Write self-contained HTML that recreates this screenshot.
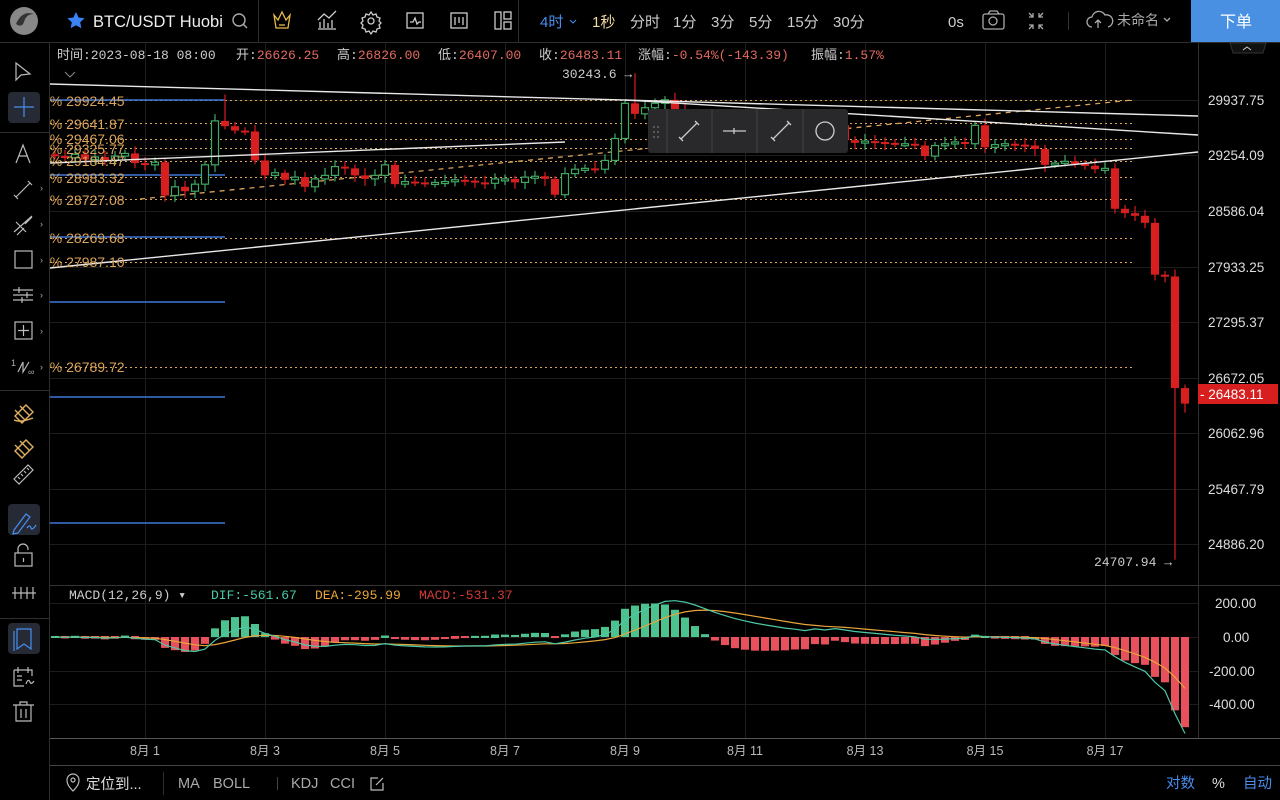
<!DOCTYPE html>
<html><head><meta charset="utf-8">
<style>
*{margin:0;padding:0;box-sizing:border-box}
body{width:1280px;height:800px;background:#000;overflow:hidden;position:relative;font-family:"Liberation Sans","Noto Sans CJK SC",sans-serif;color:#ddd}
svg{position:absolute;left:0;top:0}
.m{font-family:"Liberation Mono","Noto Sans CJK SC",monospace}
</style></head>
<body>
<svg id="s" width="1280" height="800" viewBox="0 0 1280 800" font-family="Liberation Sans, Noto Sans CJK SC, sans-serif">
<g id="grid" stroke="#1c1c1c" stroke-width="1"></g>
<line x1="0" y1="42.5" x2="1280" y2="42.5" stroke="#2e2e2e"/>
<line x1="49.5" y1="43" x2="49.5" y2="800" stroke="#2e2e2e"/>
<line x1="1198.5" y1="43" x2="1198.5" y2="738" stroke="#2e2e2e"/>
<line x1="50" y1="585.5" x2="1280" y2="585.5" stroke="#333"/>
<line x1="50" y1="738.5" x2="1280" y2="738.5" stroke="#555"/>
<line x1="50" y1="765.5" x2="1280" y2="765.5" stroke="#444"/>

<g stroke="#d9a35a" stroke-width="1" stroke-dasharray="2,3">
<line x1="50" y1="100.5" x2="1133" y2="100.5"/><line x1="50" y1="123.5" x2="1133" y2="123.5"/>
<line x1="50" y1="139.5" x2="1133" y2="139.5"/><line x1="50" y1="148.5" x2="1133" y2="148.5"/>
<line x1="50" y1="161.5" x2="1133" y2="161.5"/><line x1="50" y1="177.5" x2="1133" y2="177.5"/>
<line x1="50" y1="199.5" x2="1133" y2="199.5"/><line x1="50" y1="238.5" x2="1133" y2="238.5"/>
<line x1="50" y1="262.5" x2="1133" y2="262.5"/><line x1="50" y1="367.5" x2="1133" y2="367.5"/>
</g>
<line x1="140" y1="199" x2="1133" y2="100" stroke="#d9a35a" stroke-width="1.3" stroke-dasharray="5,5"/>
<g stroke="#3c78d8" stroke-width="1.5">
<line x1="50" y1="100" x2="225" y2="100"/><line x1="50" y1="175" x2="225" y2="175"/>
<line x1="50" y1="237" x2="225" y2="237"/><line x1="50" y1="302" x2="225" y2="302"/>
<line x1="50" y1="397" x2="225" y2="397"/><line x1="50" y1="523" x2="225" y2="523"/>
</g>
<g id="candles"></g>
<g stroke="#e8e8e8" stroke-width="1.4">
<line x1="50" y1="84" x2="1198" y2="116"/>
<line x1="625" y1="100" x2="1198" y2="135"/>
<line x1="50" y1="268" x2="1198" y2="152"/>
<line x1="50" y1="163" x2="565" y2="142"/>
</g>
<g fill="#d9a35a" font-size="14">
<text x="42" y="106">0% 29924.45</text><text x="42" y="129">5% 29641.87</text>
<text x="42" y="144">2% 29467.06</text><text x="42" y="154">0% 29325.77</text>
<text x="42" y="166">3% 29184.47</text><text x="42" y="183">5% 28983.32</text>
<text x="42" y="205">0% 28727.08</text><text x="42" y="243">2% 28269.68</text>
<text x="42" y="267">3% 27987.10</text><text x="42" y="372">3% 26789.72</text>
</g>
<rect x="0" y="43" width="49" height="757" fill="#000"/>
<line x1="49.5" y1="43" x2="49.5" y2="800" stroke="#2e2e2e"/>
<line x1="0" y1="132.5" x2="49" y2="132.5" stroke="#2e2e2e"/>
<line x1="0" y1="390.5" x2="49" y2="390.5" stroke="#2e2e2e"/>
<line x1="0" y1="618.5" x2="49" y2="618.5" stroke="#2e2e2e"/>

<g id="macd"></g>

<g fill="#ccc" font-size="13" class="m">
<text x="562" y="78">30243.6 →</text>
<text x="1094" y="566">24707.94 →</text>
</g>
<rect x="648" y="109" width="200" height="44" rx="3" fill="#29292c"/>
<g stroke="#444"><line x1="667" y1="109" x2="667" y2="153"/><line x1="712" y1="109" x2="712" y2="153"/><line x1="757" y1="109" x2="757" y2="153"/><line x1="803" y1="109" x2="803" y2="153"/></g>
<g fill="#666"><circle cx="654" cy="127" r="1"/><circle cx="658" cy="127" r="1"/><circle cx="654" cy="132" r="1"/><circle cx="658" cy="132" r="1"/><circle cx="654" cy="137" r="1"/><circle cx="658" cy="137" r="1"/></g>
<g stroke="#ccc" stroke-width="1.3" fill="none">
<path d="M681 139 L697 123 M679 137 L683 141 M695 121 L699 125"/>
<path d="M723 131 H746 M734 128 V134"/>
<path d="M773 139 L789 123 M771 137 L775 141 M787 121 L791 125"/>
<circle cx="825" cy="131" r="9"/>
</g>

<g fill="#ddd" font-size="13.5">
<text x="1208" y="105">29937.75</text><text x="1208" y="160">29254.09</text>
<text x="1208" y="216">28586.04</text><text x="1208" y="272">27933.25</text>
<text x="1208" y="327">27295.37</text><text x="1208" y="383">26672.05</text>
<text x="1208" y="438">26062.96</text><text x="1208" y="494">25467.79</text>
<text x="1208" y="549">24886.20</text>
<text x="1215" y="608">200.00</text><text x="1223" y="642">0.00</text>
<text x="1209" y="676">-200.00</text><text x="1209" y="709">-400.00</text>
</g>
<rect x="1198" y="384" width="80" height="20" fill="#d71f1f"/>
<text x="1200" y="399" fill="#fff" font-size="13.5">- 26483.11</text>

<g fill="#bbb" font-size="12.5" text-anchor="middle">
<text x="145" y="755">8月 1</text><text x="265" y="755">8月 3</text><text x="385" y="755">8月 5</text>
<text x="505" y="755">8月 7</text><text x="625" y="755">8月 9</text><text x="745" y="755">8月 11</text>
<text x="865" y="755">8月 13</text><text x="985" y="755">8月 15</text><text x="1105" y="755">8月 17</text>
</g>

<g font-size="13" class="m" fill="#ccc">
<text x="57" y="59">时间:2023-08-18 08:00</text>
<text x="236" y="59">开:<tspan fill="#e26a5f">26626.25</tspan></text>
<text x="337" y="59">高:<tspan fill="#e26a5f">26826.00</tspan></text>
<text x="438" y="59">低:<tspan fill="#e26a5f">26407.00</tspan></text>
<text x="539" y="59">收:<tspan fill="#e26a5f">26483.11</tspan></text>
<text x="638" y="59">涨幅:<tspan fill="#e26a5f">-0.54%(-143.39)</tspan></text>
<text x="811" y="59">振幅:<tspan fill="#e26a5f">1.57%</tspan></text>
<text x="69" y="599">MACD(12,26,9) ▾</text>
<text x="211" y="599" fill="#4cc9a6">DIF:-561.67</text>
<text x="315" y="599" fill="#e9a53a">DEA:-295.99</text>
<text x="419" y="599" fill="#d43a3a">MACD:-531.37</text>
</g>
<path d="M65 72 l5 5 l5 -5" stroke="#888" fill="none"/>
<path d="M1230 43 h36 l-3 10 h-30z" fill="#111" stroke="#333"/>
<path d="M1243 50 l4 -3 l4 3" stroke="#ccc" fill="none"/>

<circle cx="24" cy="21" r="14" fill="#888"/>
<path d="M16 24 q6 -14 18 -10 q-8 0 -10 8 q-2 6 -8 2z" fill="#333"/>
<path d="M76 12 l2.6 5.5 6 .7 -4.4 4.1 1.2 6 -5.4 -3 -5.4 3 1.2 -6 -4.4 -4.1 6 -.7z" fill="#3b82f6"/>
<text x="93" y="27" fill="#eee" font-size="16.5">BTC/USDT Huobi</text>
<g stroke="#aaa" stroke-width="1.4" fill="none">
<circle cx="239" cy="20" r="6"/><path d="M243 24 l4 4"/>
</g>
<line x1="258.5" y1="0" x2="258.5" y2="42" stroke="#2e2e2e"/>
<g stroke="#ccc" stroke-width="1.3" fill="none">
<path d="M274 15 l4 5 l4 -8 l4 8 l4 -5 l-2 13 h-12z" stroke="#e9b949"/><path d="M279 25 h6" stroke="#e9b949"/>
<path d="M318 29 h18 M320 28 v-6 M324 28 v-9 M328 28 v-5 M332 28 v-8 M318 20 l6 -6 l5 4 l7 -7"/>
<circle cx="371" cy="21" r="3"/><path d="M371 12 l2 3 3 -1 1 3 3 1 -1 3 2 2 -2 2 1 3 -3 1 -1 3 -3 -1 -2 3 -2 -3 -3 1 -1 -3 -3 -1 1 -3 -2 -2 2 -2 -1 -3 3 -1 1 -3 3 1z"/>
<rect x="407" y="13" width="16" height="15"/><path d="M410 22 h3 l2 -4 2 6 2 -2 h2"/>
<rect x="451" y="13" width="16" height="15"/><path d="M455 17 v8 M459 17 v6 M463 17 v8"/>
<rect x="495" y="12" width="6" height="17"/><rect x="504" y="12" width="7" height="7"/><rect x="504" y="22" width="7" height="7"/>
</g>
<line x1="518.5" y1="0" x2="518.5" y2="42" stroke="#2e2e2e"/>
<g font-size="15">
<text x="540" y="27" fill="#4a8ef0">4时</text><path d="M570 20 l3 3 3 -3" stroke="#4a8ef0" fill="none"/>
<text x="592" y="27" fill="#f0d9a0">1秒</text>
<text x="630" y="27" fill="#ccc">分时</text><text x="673" y="27" fill="#ccc">1分</text>
<text x="711" y="27" fill="#ccc">3分</text><text x="749" y="27" fill="#ccc">5分</text>
<text x="787" y="27" fill="#ccc">15分</text><text x="833" y="27" fill="#ccc">30分</text>
<text x="948" y="27" fill="#ccc">0s</text>
<text x="1117" y="25" fill="#aaa" font-size="14">未命名</text>
</g>
<g stroke="#aaa" stroke-width="1.3" fill="none">
<rect x="983" y="14" width="21" height="15" rx="2"/><path d="M988 14 l2 -3 h7 l2 3"/><circle cx="993" cy="21" r="4"/>
<path d="M1029 13 l4 4 M1033 13 v4 h-4 M1043 13 l-4 4 M1039 13 v4 h4 M1029 29 l4 -4 M1033 29 v-4 h-4 M1043 29 l-4 -4 M1039 29 v-4 h4"/>
<path d="M1092 27 a5 5 0 0 1 0 -10 a7 7 0 0 1 13 -2 a5 5 0 0 1 3 12 M1098 28 v-8 M1095 23 l3 -3 3 3"/>
<path d="M1164 18 l3 3 3 -3"/>
</g>
<line x1="1068.5" y1="12" x2="1068.5" y2="30" stroke="#333"/>
<rect x="1191" y="0" width="89" height="42" fill="#4a90e2"/>
<text x="1220" y="27" fill="#fff" font-size="16">下单</text>

<rect x="8" y="92" width="32" height="31" rx="4" fill="#252a35"/>
<rect x="8" y="504" width="32" height="31" rx="4" fill="#252a35"/>
<rect x="8" y="623" width="32" height="31" rx="4" fill="#252a35"/>
<g stroke="#bbb" stroke-width="1.2" fill="none">
<path d="M16 63 v17 l5 -5 l9 -1z"/>
<path d="M24 97 v20 M14 107 h20" stroke="#4a8ef0"/>
<path d="M16 163 l7 -18 l7 18 M19 156 h9"/>
<path d="M16 197 l14 -14 M14 195 l4 4 M28 181 l4 4"/>
<path d="M14 232 l18 -16 M17 235 l7 -7 M25 224 l7 -7 M16 222 l10 10"/>
<rect x="15" y="251" width="17" height="17"/>
<path d="M13 290 h20 M13 295 h20 M13 300 h20 M19 287 v6 M27 292 v6 M22 297 v6"/>
<rect x="15" y="322" width="17" height="17"/><path d="M23.5 325 v11 M18 330.5 h11"/>
<path d="M18 372 l5 -10 l0 10 l6 -10"/>
<path d="M14 479 l14 -14 l5 5 l-14 14z M18 477 l2 2 M21 474 l2 2 M24 471 l2 2 M27 468 l2 2"/>
<path d="M14 530 l12 -16 l4 3 l-12 16 l-5 1z" stroke="#4a8ef0"/><path d="M27 528 q3 -4 4 0 q1 3 5 -3" stroke="#4a8ef0"/>
<rect x="15" y="553" width="17" height="13"/><path d="M18 553 v-4 a5 5 0 0 1 10 0 v1 M23.5 558 v4"/>
<path d="M12 593 h24 M15 587 v12 M21 587 v12 M27 587 v12 M33 587 v12"/>
<path d="M17 629 h14 v20 l-7 -5 l-7 5z" stroke="#4a8ef0"/><path d="M14 631 v20" stroke="#4a8ef0"/>
<path d="M14 670 h18 v6 M14 670 v16 h10 M18 667 v6 M28 667 v6 M17 676 h5 M17 680 h5 M26 684 q2 -6 4 -2 q1 3 4 -1"/>
<path d="M16 705 v16 h15 v-16 M13 705 h21 M20 705 v-3 h7 v3 M21 709 v9 M26 709 v9"/>
</g>
<g fill="#aaa" font-size="9"><text x="11" y="366">1</text><text x="28" y="375">∞</text>
<text x="40" y="191">›</text><text x="40" y="227">›</text><text x="40" y="263">›</text><text x="40" y="298">›</text><text x="40" y="334">›</text><text x="40" y="370">›</text></g>
<g stroke="#e0b060" stroke-width="1.4" fill="none">
<path d="M15 416 l11 -11 l7 7 l-11 11z M15 410 l10 10 M20 406 l9 9 M14 420 q6 3 19 -2"/>
<path d="M15 451 l11 -11 l7 7 l-11 11z M15 445 l10 10 M20 441 l9 9"/>
</g>

<g stroke="#bbb" stroke-width="1.2" fill="none"><path d="M73 791 c-6 -6 -6 -9 -6 -11 a6 6 0 0 1 12 0 c0 2 0 5 -6 11z"/><circle cx="73" cy="780" r="2"/>
<path d="M378 778 h-7 v12 h12 v-7 M376 785 l7 -7"/></g>
<line x1="163.5" y1="772" x2="163.5" y2="795" stroke="#2e2e2e"/>
<line x1="277.5" y1="777" x2="277.5" y2="790" stroke="#444"/>
<g font-size="14.5">
<text x="86" y="789" fill="#ddd">定位到...</text>
<text x="178" y="788" fill="#aaa">MA</text><text x="213" y="788" fill="#aaa">BOLL</text>
<text x="291" y="788" fill="#aaa">KDJ</text><text x="330" y="788" fill="#aaa">CCI</text>
<text x="1166" y="788" fill="#4a8ef0">对数</text><text x="1212" y="788" fill="#ddd">%</text><text x="1243" y="788" fill="#4a8ef0">自动</text>
</g>
</svg>
<script>
var NS="http://www.w3.org/2000/svg";
function el(p,t,a){var e=document.createElementNS(NS,t);for(var k in a)e.setAttribute(k,a[k]);p.appendChild(e);return e;}
var g=document.getElementById('grid');
[145,265,385,505,625,745,865,985,1105].forEach(function(x){el(g,'line',{x1:x+.5,y1:43,x2:x+.5,y2:738});});
[100,155,211,267,322,378,433,489,544,603,637,671,704].forEach(function(y){el(g,'line',{x1:50,y1:y+.5,x2:1198,y2:y+.5});});
var C=[29300,29280,29320,29260,29290,29250,29300,29330,29220,29200,29230,28850,28950,28900,28980,29200,29700,29640,29590,29580,29250,29080,29110,29030,29060,28950,29040,29080,29180,29160,29080,29040,29080,29200,28980,29010,29000,28990,29000,29010,29030,29020,29000,28990,29040,29040,29000,29060,29070,29040,28860,29100,29150,29160,29150,29250,29500,29900,29780,29850,29900,29940,29820,29700,29600,29520,29490,29480,29470,29480,29470,29475,29470,29460,29470,29440,29650,29480,29650,29480,29450,29470,29460,29450,29440,29440,29420,29300,29420,29440,29460,29440,29650,29400,29430,29440,29430,29420,29380,29200,29220,29240,29210,29190,29150,29160,28700,28650,28620,28540,27950,27930,26660,26483];
function Y(p){return 100+(29937.75-p)*0.08789;}
var cg=document.getElementById('candles');
for(var i=0;i<C.length;i++){
 var x=55+10*i,o=i?C[i-1]:29320,c=C[i];
 var hi=Math.max(o,c)+35+((i*37)%50),lo=Math.min(o,c)-35-((i*53)%50);
 if(x==225)hi=30000; if(x==635)hi=30243; if(x==1175)lo=24707; if(x==1185){hi=26700;lo=26380;}
 var up=c>=o,col=up?'#3fa863':'#d81e1e';
 el(cg,'line',{x1:x,y1:Y(hi),x2:x,y2:Y(lo),stroke:col,'stroke-width':1.2});
 var t=Y(Math.max(o,c)),b=Y(Math.min(o,c));if(b-t<2)b=t+2;
 if(up)el(cg,'rect',{x:x-3.5,y:t,width:7,height:b-t,fill:'#000',stroke:col,'stroke-width':1.2});
 else el(cg,'rect',{x:x-4,y:t,width:8,height:b-t,fill:col});
}
var m=document.getElementById('macd');
var e12=C[0],e26=C[0],dea=0,dif=[],de=[],hs=[];
for(var i=0;i<C.length;i++){e12=e12+(C[i]-e12)*2/13;e26=e26+(C[i]-e26)*2/27;var d=e12-e26;dea=dea+(d-dea)*0.2;dif.push(d);de.push(dea);hs.push((d-dea)*2);}
function MY(v){return 637-v*0.17;}
for(var i=0;i<C.length;i++){var x=55+10*i,h=hs[i],y1=MY(Math.max(h,0)),y2=MY(Math.min(h,0));if(y2-y1<2){y1-=1;y2+=1;}
 el(m,'rect',{x:x-4,y:y1,width:8,height:y2-y1,fill:h>=0?'#4cc28e':'#e8505b'});}
var p1='',p2='';for(var i=0;i<C.length;i++){var x=55+10*i;p1+=(i?'L':'M')+x+' '+MY(dif[i]).toFixed(1);p2+=(i?'L':'M')+x+' '+MY(de[i]).toFixed(1);}
el(m,'path',{d:p2,stroke:'#e9a53a',fill:'none','stroke-width':1.2});
el(m,'path',{d:p1,stroke:'#4cc9a6',fill:'none','stroke-width':1.2});
</script>
</body></html>
